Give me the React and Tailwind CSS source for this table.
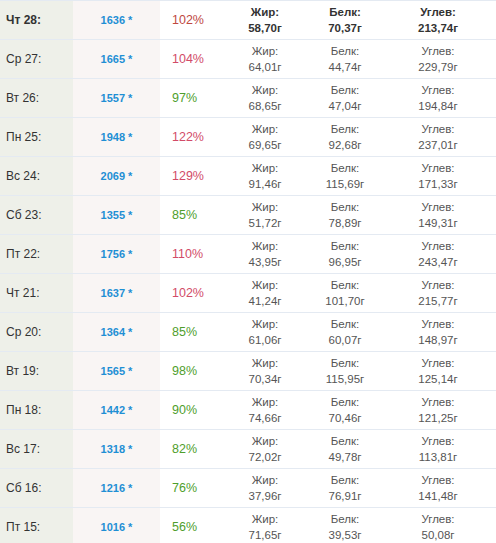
import React from 'react';

const rows = [
    ['Чт 28:', '1636', '102%', '58,70г', '70,37г', '213,74г'],
    ['Ср 27:', '1665', '104%', '64,01г', '44,74г', '229,79г'],
    ['Вт 26:', '1557', '97%', '68,65г', '47,04г', '194,84г'],
    ['Пн 25:', '1948', '122%', '69,65г', '92,68г', '237,01г'],
    ['Вс 24:', '2069', '129%', '91,46г', '115,69г', '171,33г'],
    ['Сб 23:', '1355', '85%', '51,72г', '78,89г', '149,31г'],
    ['Пт 22:', '1756', '110%', '43,95г', '96,95г', '243,47г'],
    ['Чт 21:', '1637', '102%', '41,24г', '101,70г', '215,77г'],
    ['Ср 20:', '1364', '85%', '61,06г', '60,07г', '148,97г'],
    ['Вт 19:', '1565', '98%', '70,34г', '115,95г', '125,14г'],
    ['Пн 18:', '1442', '90%', '74,66г', '70,46г', '121,25г'],
    ['Вс 17:', '1318', '82%', '72,02г', '49,78г', '113,81г'],
    ['Сб 16:', '1216', '76%', '37,96г', '76,91г', '141,48г'],
    ['Пт 15:', '1016', '56%', '71,65г', '39,53г', '50,08г'],
];

const Macro = ({ label, value, bold, width }) => (
    <div className={`${width} flex flex-col items-center pt-[3px] text-[11.5px] leading-[16px] ${bold ? 'font-bold text-[#333]' : 'text-[#555]'}`}>
        <span>{label}</span>
        <span>{value}</span>
    </div>
);

const DayRow = ({ row, first }) => {
    const [day, kcal, pct, fat, prot, carb] = row;
    const over = parseInt(pct) > 100;
    return (
        <div className="flex h-[39px] border-b border-[#e4eaf2]">
            <div className={`w-[73px] bg-[#eef0e9] flex items-center pl-[6px] text-[12px] text-[#333] ${first ? 'font-bold' : ''}`}>
                {day}
            </div>
            <div className="w-[87px] bg-[#f9f5f4] flex items-center justify-center text-[11px] font-bold text-[#1f8fd4]">
                {kcal} *
            </div>
            <div className={`w-[75px] flex items-center pl-[12px] text-[12.5px] ${over ? (first ? 'text-[#c0483f]' : 'text-[#d24b68]') : 'text-[#4f9e2c]'}`}>
                {pct}
            </div>
            <Macro label="Жир:" value={fat} bold={first} width="w-[60px]" />
            <Macro label="Белк:" value={prot} bold={first} width="w-[100px]" />
            <Macro label="Углев:" value={carb} bold={first} width="w-[86px]" />
            <div className="flex-1" />
        </div>
    );
};

const App = () => {
    return (
        <div className="w-[496px] h-[543px] overflow-hidden bg-white" style={{ fontFamily: '"Liberation Sans", Arial, sans-serif' }}>
            <div className="border-t border-[#e4eaf2]">
                {rows.map((r, i) => (
                    <DayRow key={r[0]} row={r} first={i === 0} />
                ))}
            </div>
        </div>
    );
};

export default App;
